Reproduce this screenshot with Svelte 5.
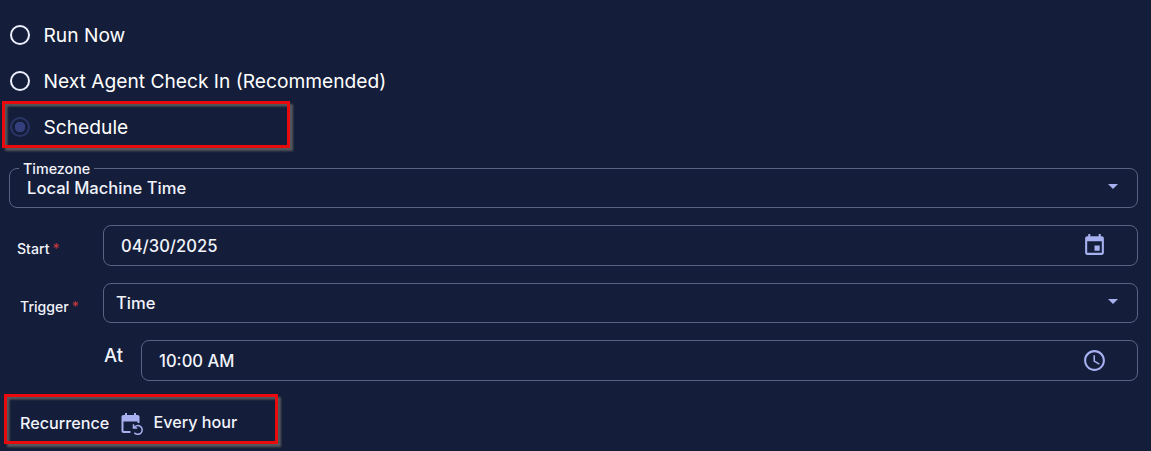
<script lang="ts">
  let mode = $state('schedule')

  const modes = [
    { id: 'now', label: 'Run Now' },
    { id: 'checkin', label: 'Next Agent Check In (Recommended)' },
    { id: 'schedule', label: 'Schedule' },
  ]
</script>

{#snippet caret()}
  <svg class="caret" viewBox="0 0 10 5" width="10" height="5" aria-hidden="true">
    <path d="M0 0h10L5 5z" />
  </svg>
{/snippet}

<form class="schedule">
  <div class="modes" role="radiogroup">
    {#each modes as m}
      <label class="mode">
        <input type="radio" name="mode" value={m.id} bind:group={mode} />
        <span class="mode__dot" class:mode__dot--on={mode === m.id}></span>
        <span class="mode__label">{m.label}</span>
      </label>
    {/each}
    <div class="mark mark--schedule"></div>
  </div>

  <fieldset class="timezone">
    <legend>Timezone</legend>
    <span class="value">Local Machine Time</span>
    {@render caret()}
  </fieldset>

  <div class="row row--start">
    <span class="row__label">Start<i>*</i></span>
    <div class="field field--wide">
      <span class="value">04/30/2025</span>
      <svg class="icon" viewBox="0 0 24 24" width="25" height="25" aria-hidden="true">
        <path
          d="M17 12h-5v5h5v-5zM16 1v2H8V1H6v2H5c-1.11 0-1.99.9-1.99 2L3 19c0 1.1.89 2 2 2h14c1.1 0 2-.9 2-2V5c0-1.1-.9-2-2-2h-1V1h-2zm3 18H5V8h14v11z"
        />
      </svg>
    </div>
  </div>

  <div class="row row--trigger">
    <span class="row__label">Trigger<i>*</i></span>
    <div class="field">
      <span class="value">Time</span>
      {@render caret()}
    </div>
  </div>

  <div class="row row--at">
    <span class="row__label">At</span>
    <div class="field field--wide">
      <span class="value">10:00 AM</span>
      <svg class="icon" viewBox="0 0 24 24" width="25" height="25" aria-hidden="true">
        <path
          d="M11.99 2C6.47 2 2 6.48 2 12s4.47 10 9.99 10C17.52 22 22 17.52 22 12S17.52 2 11.99 2zM12 20c-4.42 0-8-3.58-8-8s3.58-8 8-8 8 3.58 8 8-3.58 8-8 8zm.5-13H11v6l5.25 3.15.75-1.23-4.5-2.67z"
        />
      </svg>
    </div>
  </div>

  <div class="recurrence">
    <span>Recurrence</span>
    <svg class="icon" viewBox="0 0 22 22" width="22" height="22" aria-hidden="true">
      <path
        d="M4 0v2H2.5C1.2 2 .5 2.8 .5 4v14c0 1.2 .8 2 2 2H9.5v-2H2.5V8.500h14V10h2V4c0-1.2-.8-2-2-2H15V0h-2v2H6V0z"
      />
      <path
        class="icon__arrow"
        d="M12.5 11.3v3.7h3.7M12.9 14.9A4.4 4.4 0 1 1 13.4 19.7"
      />
    </svg>
    <span class="recurrence__value">Every hour</span>
    <div class="mark mark--recurrence"></div>
  </div>
</form>

<style>
  :global(body) {
    background: #141d39;
  }
  .schedule {
    box-sizing: border-box;
    height: 451px;
    padding: 12px 13px 0 9px;
    overflow: hidden;
    color: #f1f3fb;
    font-family: Inter, sans-serif;
    font-size: 16.6px;
  }
  .modes {
    position: relative;
  }
  .mode {
    display: flex;
    align-items: center;
    gap: 13.5px;
    height: 46px;
    padding-left: 1px;
    font-size: 19.2px;
    color: #fff;
  }
  .mode input {
    position: absolute;
    opacity: 0;
  }
  .mode__dot {
    box-sizing: border-box;
    width: 20px;
    height: 20px;
    border: 2px solid #edf0ff;
    border-radius: 50%;
  }
  .mode__dot--on {
    border-color: #2b3568;
    background: radial-gradient(circle, #343f7e 5px, transparent 5.5px);
  }
  /* red callout frames with a soft grey drop */
  .mark {
    position: absolute;
    box-sizing: border-box;
    border: 3px solid #e90a0d;
    border-width: 3px 3px 3px 3.5px;
    box-shadow:
      2.5px 2.5px 2px #54575c,
      inset 2.5px 2.5px 2px #54575c;
    pointer-events: none;
  }
  .mark--schedule {
    left: -7px;
    top: 89px;
    width: 288px;
    height: 47px;
  }
  .timezone {
    display: flex;
    align-items: center;
    justify-content: space-between;
    box-sizing: border-box;
    height: 48px;
    margin: 10px 0 0;
    padding: 0 19px 8px 17px;
    border: 1px solid #596484;
    border-radius: 8px;
    min-width: 0;
  }
  .timezone .caret {
    margin-bottom: 4px;
  }
  .timezone legend {
    height: 17px;
    margin-left: -8px;
    padding: 0 4px;
    font-size: 14.3px;
    font-weight: 500;
    line-height: 17px;
  }
  .value {
    font-weight: 500;
  }
  .caret {
    fill: #a8b1f0;
  }
  .icon {
    fill: #a8b1f0;
  }
  .icon__arrow {
    fill: none;
    stroke: #a8b1f0;
    stroke-width: 1.5;
  }
  .row {
    display: flex;
    margin-top: 17px;
    --label: 94px;
  }
  .row--at {
    --label: 132px;
  }
  .row__label {
    box-sizing: border-box;
    flex: 0 0 var(--label);
    padding: 15px 0 0 8px;
    font-size: 14.1px;
    font-weight: 500;
    line-height: 18px;
  }
  .row--trigger .row__label {
    padding-left: 11px;
  }
  .row--at .row__label {
    padding: 4px 0 0 95px;
    font-size: 18.5px;
    line-height: 23px;
  }
  .row__label i {
    margin-left: 3px;
    color: #c73a3f;
    font-style: normal;
    font-weight: 400;
  }
  .field {
    display: flex;
    flex: 1;
    align-items: center;
    justify-content: space-between;
    box-sizing: border-box;
    height: 40px;
    padding: 0 19px 1px 12px;
    border: 1px solid #596484;
    border-radius: 8px;
  }
  .field .caret {
    margin-bottom: 2px;
  }
  .field--wide {
    height: 41px;
    padding: 0 30px 0 17px;
  }
  .recurrence {
    position: relative;
    display: flex;
    align-items: center;
    height: 40px;
    margin-top: 22px;
    padding-left: 11px;
    font-size: 16.2px;
    font-weight: 500;
  }
  .recurrence .icon {
    margin: 1px 10px 0 12px;
  }
  .recurrence__value {
    margin-top: -2px;
  }
  .mark--recurrence {
    left: -5px;
    top: -9px;
    width: 274px;
    height: 50px;
  }
</style>
